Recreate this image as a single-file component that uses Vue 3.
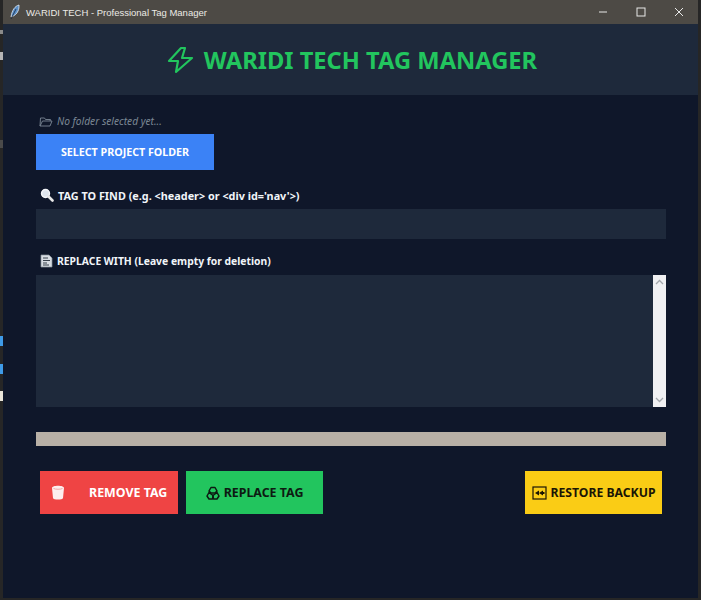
<template>
  <div class="screen">
    <div class="edge">
      <span v-for="bit in edgeBits" :key="bit.top" class="edge-bit" :style="{ marginTop: bit.top + 'px', height: bit.height + 'px', background: bit.color }"></span>
    </div>
    <div class="window">
      <div class="titlebar">
        <svg class="feather" width="12" height="16" viewBox="0 0 12 16">
          <path d="M10 1C6 2 3 6 2 13c3-1 6-3 7-6 1-2 1-4 1-6z" fill="#5b8fc7" stroke="#dfe8f2" stroke-width=".8" />
          <path d="M2 15 7 5" stroke="#16263c" stroke-width=".8" fill="none" />
        </svg>
        <span class="app-title">WARIDI TECH - Professional Tag Manager</span>
        <div class="win-controls">
          <svg width="12" height="12" viewBox="0 0 12 12"><path d="M2 6h8" stroke="#e8e8e8" stroke-width="1" /></svg>
          <svg width="12" height="12" viewBox="0 0 12 12"><rect x="2" y="2" width="8" height="8" fill="none" stroke="#e8e8e8" stroke-width="1" /></svg>
          <svg width="12" height="12" viewBox="0 0 12 12"><path d="M2 2l8 8M10 2l-8 8" stroke="#e8e8e8" stroke-width="1" /></svg>
        </div>
      </div>

      <header class="banner">
        <svg width="30" height="28" viewBox="0 0 30 28" fill="none">
          <path d="M15 2 3 15h9l-2 11 16-14h-10l3-10z" stroke="#22c55e" stroke-width="2.2" stroke-linejoin="round" />
        </svg>
        <h1>WARIDI TECH TAG MANAGER</h1>
      </header>

      <main class="content">
        <p class="folder-status">
          <svg width="14" height="11" viewBox="0 0 14 11" fill="none">
            <path d="M1 10 1.5 2h4l1 1.5h5l-.5 1.500M1 10h10l2-5H3.500L1 10z" stroke="#7b8794" stroke-width=".9" />
          </svg>
          No folder selected yet...
        </p>
        <button class="btn btn-folder">SELECT PROJECT FOLDER</button>

        <label class="field-label label-find">
          <svg width="14" height="14" viewBox="0 0 14 14" fill="none">
            <circle cx="5.500" cy="5.500" r="4" fill="#dfe6ee" stroke="#f5f7fa" stroke-width="1.400" />
            <path d="M8.500 8.500 12.500 12.500" stroke="#e8e8e8" stroke-width="2.600" stroke-linecap="round" />
          </svg>
          TAG TO FIND (e.g. &lt;header&gt; or &lt;div id='nav'&gt;)
        </label>
        <input class="field-input" type="text" />

        <label class="field-label label-replace">
          <svg width="13" height="14" viewBox="0 0 13 14" fill="none">
            <path d="M1 1h8l3 3v9H1z" fill="#d8dde3" stroke="#8b939c" stroke-width=".7" />
            <path d="M3 4h5M3 6.500h7M3 9h4M3 11h6" stroke="#39424d" stroke-width="1" />
          </svg>
          REPLACE WITH (Leave empty for deletion)
        </label>
        <div class="textarea-wrap">
          <textarea class="field-area"></textarea>
          <div class="scrollbar">
            <svg width="9" height="6" viewBox="0 0 9 6" fill="none"><path d="M1 5l3.500-3.500L8 5" stroke="#a3a7ab" stroke-width="1.300" /></svg>
            <svg width="9" height="6" viewBox="0 0 9 6" fill="none"><path d="M1 1l3.500 3.500L8 1" stroke="#a3a7ab" stroke-width="1.300" /></svg>
          </div>
        </div>

        <div class="progress"></div>

        <div class="actions">
          <button class="btn btn-remove">
            <svg width="14" height="15" viewBox="0 0 14 15">
              <path d="M1 3c0-3 12-3 12 0l-1 10c-.2 2-9.800 2-10 0z" fill="#fdeeee" />
              <path d="M2.500 3.500c2 1 7 1 9 0" stroke="#f0a8a8" stroke-width="1" fill="none" />
            </svg>
            <span>REMOVE TAG</span>
          </button>
          <button class="btn btn-replace">
            <svg width="14" height="14" viewBox="0 0 14 14" fill="none" stroke="#0d1a12" stroke-width="1.500" stroke-linejoin="round">
              <path d="M5 1.500h4l2 3.500-2 2H5L3 5z" />
              <path d="M3 6.500 1 10l2 3h3.500l.5-3.500z" />
              <path d="M11 6.500 13 10l-2 3H7.500L7 9.500z" />
            </svg>
            <span>REPLACE TAG</span>
          </button>
          <button class="btn btn-restore">
            <svg width="15" height="14" viewBox="0 0 15 14" fill="none">
              <rect x="1" y="1" width="13" height="12" stroke="#1a1505" stroke-width="1.200" />
              <path d="M3 7l4-2.500v5zM7 7l4-2.500v5z" fill="#1a1505" />
              <path d="M10 6h2.500v2H10z" fill="#1a1505" />
            </svg>
            <span>RESTORE BACKUP</span>
          </button>
        </div>
      </main>
    </div>
  </div>
</template>

<script setup>
// scraps of whatever window sits behind the app, along the left edge
const edgeBits = [
  { top: 30, height: 4, color: "#8a8a8a" },
  { top: 18, height: 8, color: "#b5b5b5" },
  { top: 80, height: 8, color: "#4a4a4a" },
  { top: 188, height: 10, color: "#3f9be8" },
  { top: 18, height: 10, color: "#3f9be8" },
  { top: 17, height: 10, color: "#e8e4d8" },
];
</script>

<style>
html, body {
  margin: 0;
  background: #1c1c1c;
  overflow: hidden;
}
</style>

<style scoped>
.screen {
  width: 701px;
  height: 600px;
  display: flex;
  padding: 0 3px 2px 0;
  box-sizing: border-box;
  background: #262626;
  font-family: "Noto Sans", "Open Sans", sans-serif;
}

.edge {
  width: 3px;
  flex-shrink: 0;
  display: flex;
  flex-direction: column;
}

.edge-bit {
  display: block;
}

.window {
  flex: 1;
  display: flex;
  flex-direction: column;
  background: #0f172a;
}

.titlebar {
  height: 24px;
  flex-shrink: 0;
  display: flex;
  align-items: center;
  padding-left: 6px;
  background: #4d4a45;
  color: #eceae6;
  font-family: "Liberation Sans", Arial, sans-serif;
  font-size: 9.500px;
}

.feather {
  margin-right: 5px;
}

.win-controls {
  margin-left: auto;
  display: flex;
  gap: 26px;
  padding-right: 13px;
}

.banner {
  height: 71px;
  flex-shrink: 0;
  display: flex;
  align-items: center;
  justify-content: center;
  gap: 8px;
  padding-left: 2px;
  background: #1e293b;
}

h1 {
  margin: 0;
  color: #22c55e;
  font-size: 23.700px;
  font-weight: 700;
}

.content {
  flex: 1;
  display: flex;
  flex-direction: column;
  align-items: stretch;
  padding: 0 32px 0 33px;
}

.folder-status {
  margin: 19px 0 0;
  height: 14px;
  display: flex;
  align-items: center;
  gap: 4px;
  padding-left: 3px;
  color: #7b8794;
  font-size: 10.200px;
  font-style: italic;
}

.btn {
  border: none;
  height: 43px;
  display: flex;
  align-items: center;
  padding: 0;
  font-family: inherit;
  font-size: 12.400px;
  font-weight: 700;
}

.btn-folder {
  align-self: flex-start;
  width: 178px;
  height: 36px;
  margin-top: 6px;
  justify-content: center;
  background: #3b82f6;
  color: #fff;
  font-size: 10.700px;
}

.field-label {
  display: flex;
  align-items: center;
  gap: 4px;
  height: 14px;
  padding-left: 4px;
  color: #f1f5f9;
  font-weight: 700;
}

.label-find {
  margin-top: 18px;
  font-size: 10.850px;
}

.label-replace {
  margin-top: 15px;
  font-size: 10.350px;
}

.field-input {
  height: 30px;
  margin-top: 7px;
  border: none;
  padding: 0;
  box-sizing: border-box;
  background: #1e293b;
}

.textarea-wrap {
  height: 132px;
  margin-top: 7px;
  display: flex;
}

.field-area {
  flex: 1;
  border: none;
  padding: 0;
  resize: none;
  background: #1e293b;
}

.scrollbar {
  width: 13px;
  display: flex;
  flex-direction: column;
  align-items: center;
  justify-content: space-between;
  padding: 4px 0;
  box-sizing: border-box;
  background: #f0f0f2;
}

.progress {
  height: 14px;
  margin-top: 25px;
  background: #b8b0a6;
}

.actions {
  display: flex;
  margin-top: 25px;
  padding: 0 4px;
  gap: 8px;
}

.btn-remove {
  width: 138px;
  padding-left: 11px;
  background: #ef4444;
  color: #fff;
}

.btn-remove span {
  margin-left: 24px;
}

.btn-replace {
  width: 137px;
  justify-content: center;
  gap: 4px;
  background: #22c55e;
  color: #0d1a12;
}

.btn-restore {
  width: 137px;
  margin-left: auto;
  justify-content: center;
  gap: 4px;
  background: #facc15;
  color: #1a1505;
  font-size: 12.200px;
}
</style>
